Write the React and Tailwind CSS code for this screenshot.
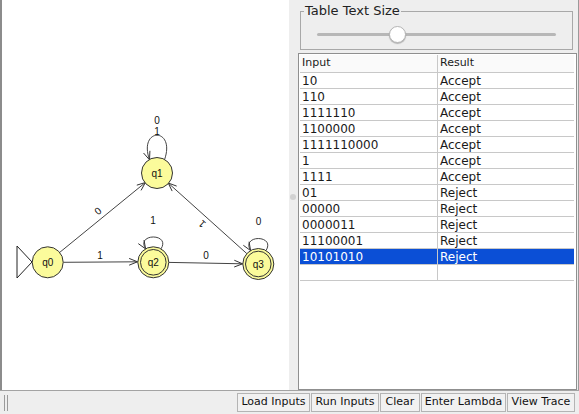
import React from "react";

const rows = [
  ["10", "Accept"],
  ["110", "Accept"],
  ["1111110", "Accept"],
  ["1100000", "Accept"],
  ["1111110000", "Accept"],
  ["1", "Accept"],
  ["1111", "Accept"],
  ["01", "Reject"],
  ["00000", "Reject"],
  ["0000011", "Reject"],
  ["11100001", "Reject"],
  ["10101010", "Reject"],
];

function Arrow({ x, y, dx, dy }) {
  const len = Math.hypot(dx, dy);
  const ux = dx / len;
  const uy = dy / len;
  const a = (22 * Math.PI) / 180;
  const L = 9;
  const p = (s) => {
    const c = Math.cos(s * a);
    const sn = Math.sin(s * a);
    const rx = ux * c - uy * sn;
    const ry = ux * sn + uy * c;
    return `${x - rx * L},${y - ry * L}`;
  };
  return (
    <polyline
      points={`${p(1)} ${x},${y} ${p(-1)}`}
      fill="none"
      stroke="#333"
      strokeWidth="1"
    />
  );
}

function Node({ x, y, label, final }) {
  return (
    <g>
      <circle cx={x} cy={y} r="15.5" fill="#fbfb9b" stroke="#333" strokeWidth="1" />
      {final && <circle cx={x} cy={y} r="12.8" fill="none" stroke="#333" strokeWidth="1" />}
      <text
        x={x}
        y={y + 3.5}
        textAnchor="middle"
        fontSize="10"
        fontFamily="'Liberation Sans', Arial, sans-serif"
        fill="#111"
      >
        {label}
      </text>
    </g>
  );
}

function Label({ x, y, t, rot = 0 }) {
  return (
    <text
      x={x}
      y={y}
      textAnchor="middle"
      dominantBaseline="central"
      fontSize="10"
      fontFamily="'Liberation Sans', Arial, sans-serif"
      fill="#111"
      transform={rot ? `rotate(${rot} ${x} ${y})` : undefined}
    >
      {t}
    </text>
  );
}

function Graph() {
  const line = "#444";
  return (
    <svg width="287" height="389" viewBox="2 0 287 389" className="block">
      {/* initial triangle */}
      <polygon points="17,246 17,278 32,262" fill="#fff" stroke="#222" strokeWidth="1" />
      {/* q0 -> q1 */}
      <line x1="59.7" y1="252.4" x2="145.4" y2="182.5" stroke={line} strokeWidth="1" />
      <Arrow x={145.4} y={182.5} dx={109.3} dy={-89.3} />
      <Label x={98} y={211} t="0" rot={-39} />
      {/* q0 -> q2 */}
      <line x1="63.3" y1="262.3" x2="137.5" y2="261.8" stroke={line} strokeWidth="1" />
      <Arrow x={137.5} y={261.8} dx={1} dy={0} />
      <Label x={100} y={255} t="1" />
      {/* q2 -> q3 */}
      <line x1="169" y1="262.4" x2="242.6" y2="263.8" stroke={line} strokeWidth="1" />
      <Arrow x={242.6} y={263.8} dx={1} dy={0.02} />
      <Label x={206} y={255.5} t="0" />
      {/* q3 -> q1 */}
      <line x1="246.8" y1="253.6" x2="168.2" y2="183" stroke={line} strokeWidth="1" />
      <Arrow x={168.2} y={183} dx={-101} dy={-91} />
      <Label x={202} y={224} t="1" rot={222} />
      {/* q1 loop */}
      <path d="M 164.5 159.8 C 176 127, 138 127, 149.5 159.8" fill="none" stroke={line} strokeWidth="1" />
      <Arrow x={149.5} y={159.8} dx={11.5} dy={32.8} />
      <Label x={157} y={120} t="0" />
      <Label x={157} y={131} t="1" />
      {/* q2 loop */}
      <path d="M 161 248.9 C 171 233, 135.6 233, 145.6 248.9" fill="none" stroke={line} strokeWidth="1" />
      <Arrow x={145.6} y={248.9} dx={10} dy={15.9} />
      <Label x={153} y={220} t="1" />
      {/* q3 loop */}
      <path d="M 266 250.6 C 276 234.5, 240.6 234.5, 250.6 250.6" fill="none" stroke={line} strokeWidth="1" />
      <Arrow x={250.6} y={250.6} dx={10} dy={16.1} />
      <Label x={258.5} y={221.5} t="0" />

      <Node x={47.7} y={262.3} label="q0" />
      <Node x={157} y={173} label="q1" />
      <Node x={153.3} y={262.3} label="q2" final />
      <Node x={258.3} y={264} label="q3" final />
    </svg>
  );
}

const buttons = [
  ["Load Inputs", "w-[73px]"],
  ["Run Inputs", "w-[68px]"],
  ["Clear", "w-[40px]"],
  ["Enter Lambda", "w-[85px]"],
  ["View Trace", "w-[68px]"],
];

export default function App() {
  return (
    <div className="w-[579px] h-[414px] bg-[#eeeeee] flex flex-col overflow-hidden font-['DejaVu_Sans',sans-serif] text-[#1a1a1a]">
      <div className="flex h-[391px] border-b border-[#a3a3a3]">
        <div className="w-[289px] bg-white border-l-2 border-[#8c8c8c]">
          <Graph />
        </div>
        <div className="w-[8px] flex items-center justify-center">
          <div className="w-[6px] h-[6px] rounded-full bg-[#d2d2d2] mt-[3px]" />
        </div>
        <div className="flex-1 flex flex-col border-r border-[#9a9a9a]">
          <fieldset className="ml-[3px] mr-[5px] mt-[4px] h-[46px] border border-[#a8a8a8] px-[16px]">
            <legend className="ml-[-13px] px-[1px] text-[13px] leading-[14px] text-[#222]">
              Table Text Size
            </legend>
            <div className="relative mt-[8px] h-[16px] flex items-center">
              <div className="w-full h-[3px] rounded-full bg-[#b7b7b7]" />
              <div className="absolute left-[72px] top-0 w-[17px] h-[17px] rounded-full bg-white border border-[#b5b5b5] shadow-[0_1px_1px_rgba(0,0,0,0.25)]" />
            </div>
          </fieldset>
          <div className="ml-[1px] mr-[1px] mt-[3px] flex-1 border border-[#8f8f8f] bg-white p-[1px] pr-[2px]">
            <div className="flex h-[18px] items-center border-b border-[#c8c8c8] text-[11px] bg-[#fafafa]">
              <div className="w-[138px] h-full flex items-center pl-[2px] border-r border-[#c8c8c8]">Input</div>
              <div className="flex-1 pl-[2px]">Result</div>
            </div>
            {rows.map(([inp, res], i) => {
              const sel = i === rows.length - 1;
              return (
                <div
                  key={i}
                  className={
                    sel
                      ? "flex h-[16px] items-center text-[12px] bg-[#0b4fd6] text-white border-b border-[#c8c8c8]"
                      : "flex h-[16px] items-center text-[12px] border-b border-[#c8c8c8]"
                  }
                >
                  <div className="w-[138px] h-full flex items-center pl-[2px] border-r border-[#c8c8c8] leading-none">
                    {inp}
                  </div>
                  <div className="flex-1 pl-[2px] leading-none">{res}</div>
                </div>
              );
            })}
            <div className="flex h-[16px] border-b border-[#c8c8c8]">
              <div className="w-[138px] h-full border-r border-[#c8c8c8]" />
              <div className="flex-1" />
            </div>
          </div>
        </div>
      </div>
      <div className="flex-1 flex items-center pr-[4px]">
        <div className="ml-[4px] flex gap-[2px] h-[16px]">
          <div className="w-px h-full bg-[#9a9a9a]" />
          <div className="w-px h-full bg-[#9a9a9a]" />
        </div>
        <div className="flex-1" />
        <div className="flex gap-[1px]">
          {buttons.map(([t, w]) => (
            <div
              key={t}
              className={`${w} h-[19px] flex items-center justify-center border border-[#b4b4b4] bg-[#f1f1f1] text-[11px] text-[#111]`}
            >
              {t}
            </div>
          ))}
        </div>
      </div>
    </div>
  );
}
